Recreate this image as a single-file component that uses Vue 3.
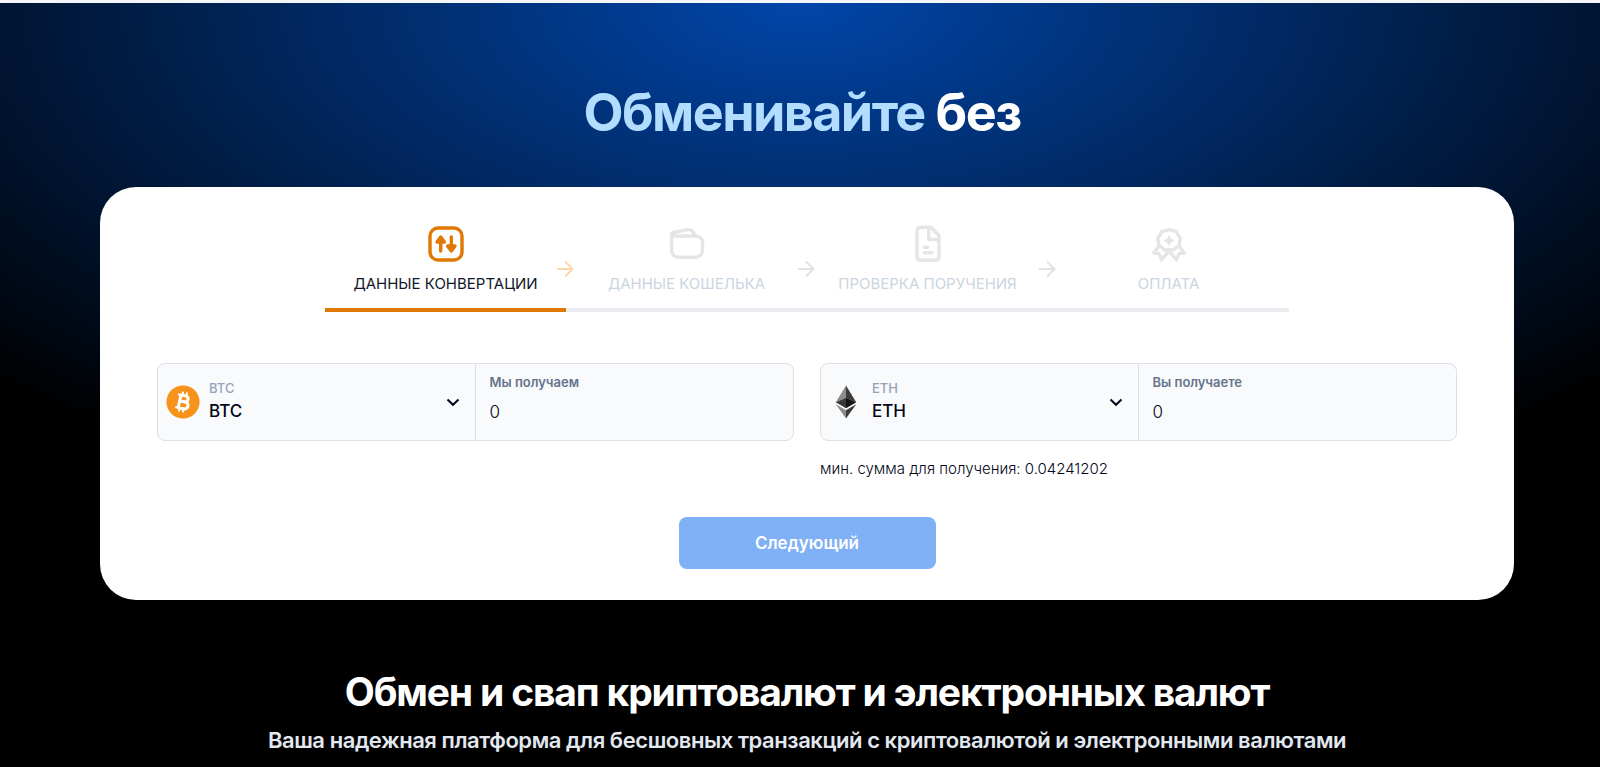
<template>
  <main class="page">
    <h1 class="hero-title"><span class="hero-accent">Обменивайте</span> без</h1>

    <form class="exchange-card" @submit.prevent>
      <ol class="steps">
        <li v-for="(step, index) in steps" :key="step.name" class="step" :class="{ active: index === 0 }">
          <svg class="step-icon" viewBox="0 0 36 36" aria-hidden="true">
            <g v-if="step.icon === 'convert'">
              <rect x="2" y="2" width="32" height="32" rx="8" />
              <path d="M12.7 25V13M23.3 11V23" />
              <path class="solid" d="M12.7 11L9 16H16.400ZM23.300 25L19.600 20H27Z" />
            </g>
            <g v-else-if="step.icon === 'wallet'">
              <path d="M2.500 10H26C30.500 10 33.500 13 33.500 17V24C33.500 28.500 30.500 31.300 26 31.300H10C5.500 31.300 2.500 28.500 2.500 24V9C2.500 7.500 3.200 6.800 4.700 6.500L17.500 3.800C21.500 3 24.500 5 26 9.500" />
            </g>
            <g v-else-if="step.icon === 'document'">
              <path d="M11 1.200H21L29 9.500V30C29 32.800 27.500 34.300 24.700 34.300H11.300C8.500 34.300 7 32.800 7 30V5.500C7 2.700 8.500 1.200 11 1.200Z" />
              <path d="M18.700 1.500V13.500H28.500M14.300 21.300H17.500M14.300 26.700H21.800" />
            </g>
            <g v-else>
              <path d="M18 3.500L21.500 4.600L25.300 5.300L26.800 8.800L29.200 11.800L28.600 15.500L28.400 19.300L25.200 21.400L22.500 24.100L18.700 23.700H17.300L13.500 24.100L10.800 21.400L7.600 19.300L7.400 15.500L6.800 11.800L9.200 8.800L10.700 5.300L14.500 4.600Z" />
              <path d="M8 20L2.800 27L8 27.500L10.500 34L18 25L25.500 34L28 27.500L33.200 27L28 20" />
              <path class="solid star" d="M18 9Q19.500 13 23.500 14.500Q19.500 16 18 20Q16.500 16 12.500 14.500Q16.500 13 18 9Z" />
            </g>
          </svg>
          <span class="step-name">{{ step.name }}</span>
          <svg v-if="index < steps.length - 1" class="step-arrow" viewBox="0 0 18 18" aria-hidden="true">
            <path d="M1 9H16M9 1.500L16.500 9L9 16.500" />
          </svg>
        </li>
      </ol>

      <div class="pairs">
        <div v-for="side in sides" :key="side.id" class="pair">
          <div class="field">
            <div class="currency">
              <svg v-if="side.currency === 'BTC'" class="coin" viewBox="0 0 34 34" aria-hidden="true">
                <circle cx="17" cy="17" r="16.600" fill="#f7931a" />
                <g transform="rotate(12 17 17)" fill="none" stroke="#fff" stroke-width="3" stroke-linejoin="round">
                  <path d="M13.500 10.500H18C22.500 10.500 22.500 16.500 18 16.500H13.500H19C24 16.500 24 23.500 19 23.500H13.500Z" />
                  <path d="M10.500 10.500H14M10.500 23.500H14" stroke-width="2.200" />
                  <path d="M15 6.800V10M19 6.800V10M15 24V27.200M19 24V27.200" stroke-width="2" />
                </g>
              </svg>
              <svg v-else class="coin" viewBox="0 0 34 34" aria-hidden="true">
                <path d="M17 .5L6.800 17.300L17 12.700Z" fill="#8c8c8c" />
                <path d="M17 .5L27.200 17.300L17 12.700Z" fill="#3c3c3b" />
                <path d="M6.800 17.300L17 12.700V23.300Z" fill="#393939" />
                <path d="M27.200 17.300L17 12.700V23.300Z" fill="#141414" />
                <path d="M6.800 19.300L17 25.300V33.500Z" fill="#8c8c8c" />
                <path d="M27.200 19.300L17 25.300V33.500Z" fill="#3c3c3b" />
              </svg>
              <div class="currency-text">
                <label class="currency-label" :for="side.id + '-currency'">{{ side.currency }}</label>
                <select :id="side.id + '-currency'" v-model="side.currency" class="currency-select">
                  <option>BTC</option>
                  <option>ETH</option>
                </select>
              </div>
              <svg class="chevron" viewBox="0 0 14 14" aria-hidden="true">
                <path d="M1.500 4.500L7 9.800L12.500 4.500" />
              </svg>
            </div>
            <div class="amount">
              <label class="amount-label" :for="side.id + '-amount'">{{ side.label }}</label>
              <input :id="side.id + '-amount'" v-model="side.amount" class="amount-input" type="text" inputmode="decimal" />
            </div>
          </div>
          <p v-if="side.hint" class="hint">{{ side.hint }}</p>
        </div>
      </div>

      <button class="next-btn" type="submit">Следующий</button>
    </form>

    <section class="intro">
      <h2 class="intro-title">Обмен и свап криптовалют и электронных валют</h2>
      <p class="intro-text">Ваша надежная платформа для бесшовных транзакций с криптовалютой и электронными валютами</p>
    </section>
  </main>
</template>

<script setup>
import { ref } from 'vue'

// Шаги обмена
const steps = [
  { name: 'Данные конвертации', icon: 'convert' },
  { name: 'Данные кошелька', icon: 'wallet' },
  { name: 'Проверка поручения', icon: 'document' },
  { name: 'Оплата', icon: 'award' }
]

// Отдаваемая и получаемая валюта
const sides = ref([
  { id: 'from', currency: 'BTC', label: 'Мы получаем', amount: '0', hint: '' },
  { id: 'to', currency: 'ETH', label: 'Вы получаете', amount: '0', hint: 'мин. сумма для получения: 0.04241202' }
])
</script>

<style>
body {
  background: #000;
}
</style>

<style scoped>
.page {
  box-sizing: border-box;
  min-height: 100vh;
  padding: 80px 86px 12px 100px;
  border-top: 3px solid #f4f6fa;
  background: radial-gradient(1131px 540px at 50% 0, #0146aa, #000) #000;
  font-family: Inter, "Liberation Sans", sans-serif;
  color: #020617;
}

.hero-title {
  margin: 0;
  padding-right: 10px;
  font-size: 52px;
  line-height: 60px;
  font-weight: 700;
  letter-spacing: -0.03em;
  text-align: center;
  color: #fff;
}

.hero-accent {
  color: #b3ddff;
}

.exchange-card {
  margin-top: 44px;
  padding: 39px 57px 31px;
  border-radius: 36px;
  background: #fff;
}

.steps {
  display: grid;
  grid-template-columns: repeat(4, 1fr);
  max-width: 964px;
  margin: 0 auto;
  padding: 0;
  list-style: none;
}

.step {
  position: relative;
  display: flex;
  flex-direction: column;
  align-items: center;
  gap: 11px;
  padding-bottom: 13px;
  border-bottom: 4px solid #ebecf0;
  color: #cbd5e1;
}

.step.active {
  border-color: #e07804;
  color: #0f172a;
}

.step-icon {
  width: 36px;
  height: 36px;
  overflow: visible;
  fill: none;
  stroke: #e5e5e5;
  stroke-width: 3.4;
  stroke-linecap: round;
  stroke-linejoin: round;
}

.step-icon .solid {
  fill: #e5e5e5;
}

.step-icon .star {
  stroke: none;
}

.active .step-icon {
  stroke: #e07804;
}

.active .solid {
  fill: #e07804;
}

.step-name {
  font-size: 15px;
  line-height: 22px;
  text-transform: uppercase;
}

.step-arrow {
  position: absolute;
  top: 34px;
  right: -8px;
  width: 18px;
  height: 18px;
  fill: none;
  stroke: #e2e2e2;
  stroke-width: 2;
}

.active .step-arrow {
  stroke: #ffd6a8;
}

.pairs {
  display: grid;
  grid-template-columns: 1fr 1fr;
  gap: 26px;
  margin-top: 51px;
}

.field {
  display: grid;
  grid-template-columns: 1fr 1fr;
  border: 1px solid #dcdfe6;
  border-radius: 8px;
  background: #f9fafc;
}

.currency {
  display: flex;
  align-items: center;
  gap: 9px;
  padding: 0 15px 0 8px;
  border-right: 1px solid #dcdfe6;
}

.coin {
  width: 34px;
  height: 34px;
}

.currency-text {
  flex: 1;
}

.currency-label {
  display: block;
  font-size: 13px;
  line-height: 18px;
  font-weight: 500;
  color: #94a3b8;
}

.currency-select {
  display: block;
  width: 100%;
  height: 28px;
  padding: 0;
  border: 0;
  appearance: none;
  background: transparent;
  font-family: inherit;
  font-size: 17px;
  font-weight: 500;
  color: #020617;
}

.chevron {
  width: 14px;
  height: 14px;
  fill: none;
  stroke: #020617;
  stroke-width: 2;
}

.amount {
  padding: 9px 14px 15px;
}

.amount-label {
  display: block;
  font-size: 13px;
  line-height: 18px;
  font-weight: 600;
  color: #64748b;
}

.amount-input {
  display: block;
  box-sizing: border-box;
  width: 100%;
  height: 26px;
  margin-top: 8px;
  padding: 0;
  border: 0;
  outline: 0;
  background: transparent;
  font-family: inherit;
  font-size: 17px;
  font-weight: 300;
  color: #020617;
}

.hint {
  margin: 16px 0 0;
  font-size: 15px;
  line-height: 24px;
  font-weight: 300;
}

.next-btn {
  display: block;
  width: 257px;
  height: 52px;
  margin: 36px auto 0;
  border: 0;
  border-radius: 8px;
  background: #80b0f6;
  font-family: inherit;
  font-size: 17px;
  font-weight: 600;
  color: #fff;
}

.intro {
  padding-top: 67px;
  text-align: center;
}

.intro-title {
  margin: 0;
  font-size: 39px;
  line-height: 50px;
  font-weight: 700;
  letter-spacing: -0.03em;
  color: #fff;
}

.intro-text {
  margin: 8px 0 0;
  font-size: 22px;
  line-height: 30px;
  font-weight: 600;
  letter-spacing: -0.02em;
  color: #e2e8f0;
}

@media (max-width: 900px) {
  .page {
    padding: 40px 16px;
  }

  .exchange-card {
    padding: 24px 16px;
  }

  .pairs {
    grid-template-columns: 1fr;
  }

  .step-name {
    font-size: 12px;
    text-align: center;
  }
}
</style>
